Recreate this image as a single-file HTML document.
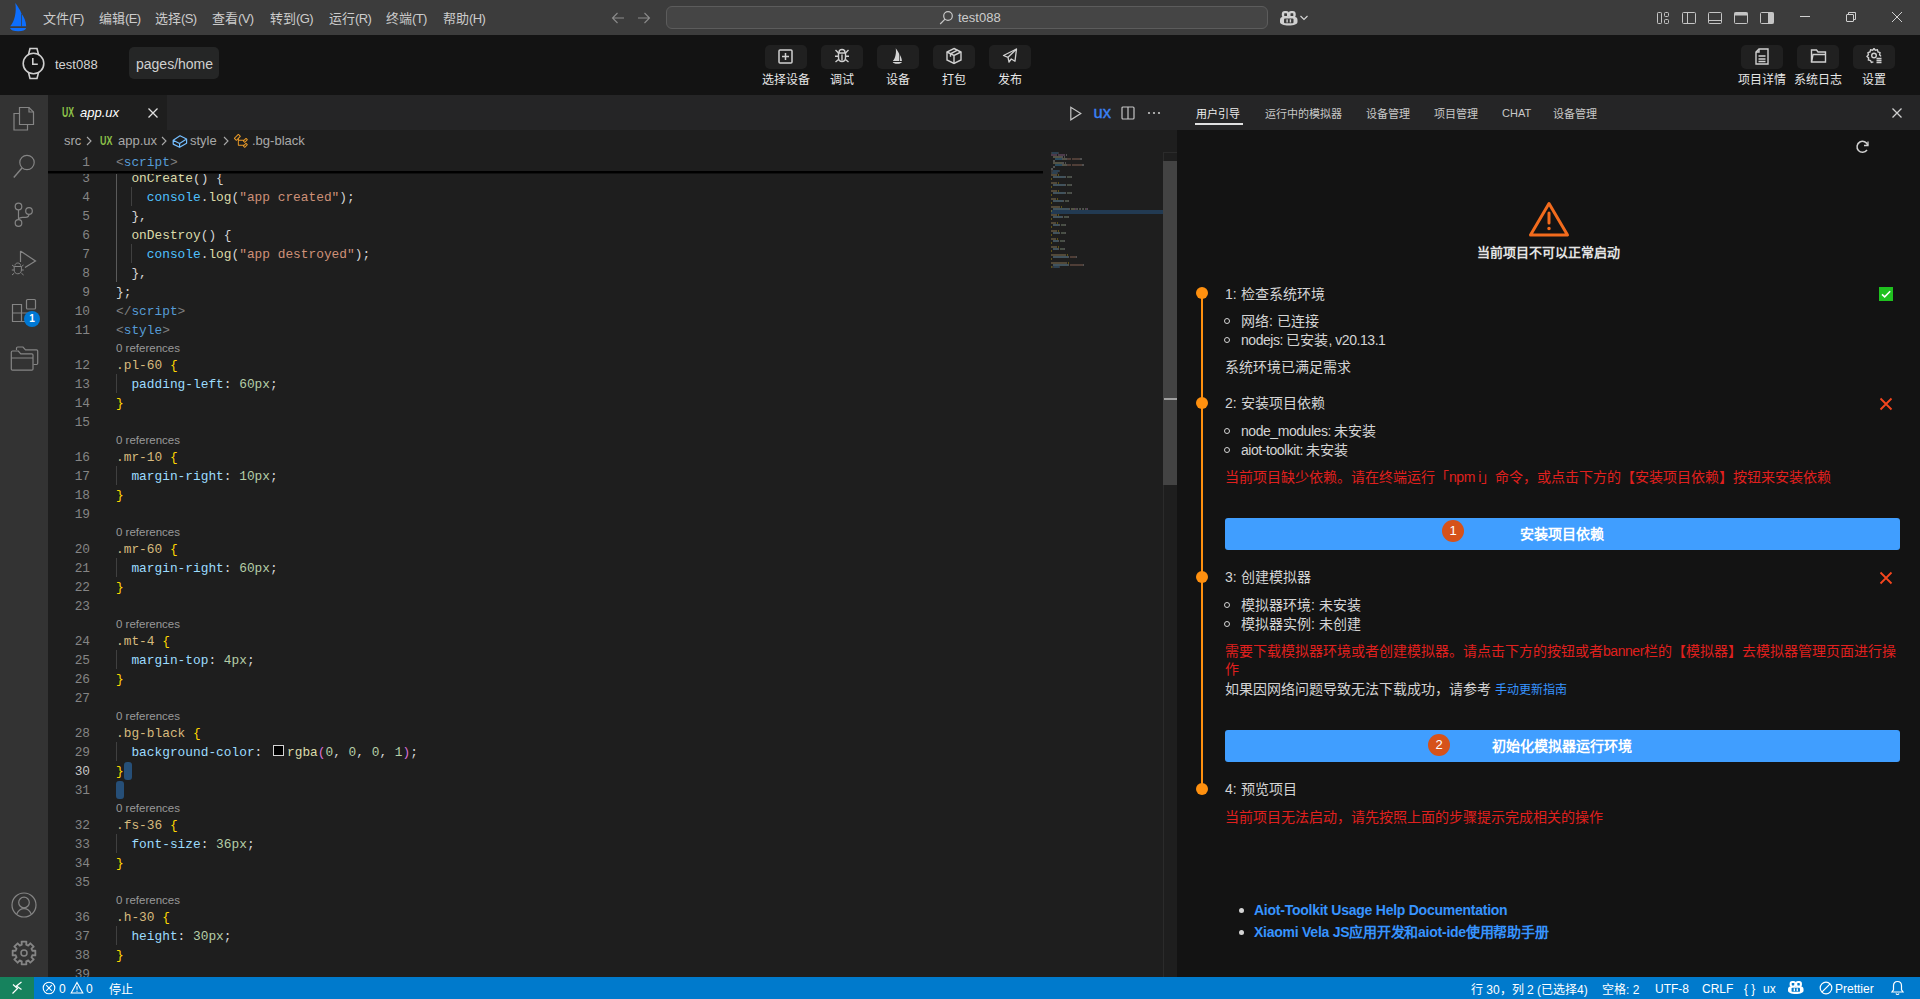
<!DOCTYPE html>
<html lang="zh-CN"><head><meta charset="utf-8">
<style>
*{box-sizing:border-box;margin:0;padding:0}
html,body{width:1920px;height:999px;overflow:hidden;background:#1e1e1e;font-family:"Liberation Sans",sans-serif;}
.a{position:absolute;white-space:pre}
#title{position:absolute;left:0;top:0;width:1920px;height:35px;background:#3c3c3c}
#tb{position:absolute;left:0;top:35px;width:1920px;height:60px;background:#131313}
#act{position:absolute;left:0;top:95px;width:48px;height:882px;background:#333333}
#ed{position:absolute;left:48px;top:95px;width:1129px;height:882px;background:#1e1e1e;overflow:hidden}
#rp{position:absolute;left:1177px;top:95px;width:743px;height:882px;background:#131313;overflow:hidden}
#sb{position:absolute;left:0;top:977px;width:1920px;height:22px;background:#007acc}
.menu{font-size:13px;color:#cccccc;top:8px}
.btn{position:absolute;width:42px;height:24px;top:10px;background:#202020;border-radius:5px}
.lbl{position:absolute;font-size:12px;color:#e6e6e6;top:35px;white-space:nowrap;text-align:center;width:80px}
.ln{position:absolute;margin-top:1px;left:48px;width:42px;text-align:right;font-family:"Liberation Mono",monospace;font-size:12.8px;line-height:19px;height:19px;color:#858585}
.ln.cur{color:#c6c6c6}
.code{position:absolute;margin-top:1px;left:116px;font-family:"Liberation Mono",monospace;font-size:12.83px;line-height:19px;height:19px;white-space:pre;color:#d4d4d4}
.cl{position:absolute;margin-top:1px;left:116px;font-size:11.5px;line-height:16px;height:16px;color:#999999;white-space:pre}
.sw{display:inline-block;width:11px;height:11px;border:1px solid #d4d4d4;background:#000;margin:0 3px 0 3px;vertical-align:0}
.g{position:absolute;width:1px;background:#404040}
.rt{position:absolute;font-size:11px;color:#c8c8c8;top:105px;white-space:nowrap}
.p14{position:absolute;font-size:14px;line-height:18px;color:#d4d4d4;white-space:nowrap}
.red{color:#e0201e}
.dot{position:absolute;left:1196px;width:12px;height:12px;border-radius:50%;background:#ff900f}
.bul{position:absolute;left:1224px;width:6px;height:6px;border-radius:50%;border:1.3px solid #d4d4d4}
.xx{position:absolute;left:1879px}
.bbtn{position:absolute;left:1225px;width:675px;height:32px;background:#409eff;border-radius:3px}
.badge{position:absolute;width:22px;height:22px;border-radius:50%;background:#d6521a;color:#fff;font-size:13px;line-height:22px;text-align:center}
.btxt{position:absolute;font-size:14px;line-height:18px;color:#fff;font-weight:bold;white-space:nowrap}
.lt{letter-spacing:-.45px}
</style></head><body>
<div id="title">
  <svg class="a" style="left:0;top:0" width="35" height="35" viewBox="0 0 35 35">
    <path d="M15.3 3C17.5 6 20 9.5 21.5 13.5C24 17 26 21 26.2 26.3H10.2C14.5 21.5 16.8 12 15.3 3z" fill="#0d6efd"/>
    <path d="M21.2 13.5v12.8h.7V14z" fill="#3c3c3c"/>
    <path d="M10 28h16.2c-.8 2.2-3.5 3.2-8 3.2S10.8 30.2 10 28z" fill="#0d6efd"/>
  </svg>
  <div class="a menu" style="left:43px">文件<span style="letter-spacing:-.6px">(F)</span></div>
  <div class="a menu" style="left:99px">编辑<span style="letter-spacing:-.6px">(E)</span></div>
  <div class="a menu" style="left:155px">选择<span style="letter-spacing:-.6px">(S)</span></div>
  <div class="a menu" style="left:212px">查看<span style="letter-spacing:-.6px">(V)</span></div>
  <div class="a menu" style="left:270px">转到<span style="letter-spacing:-.6px">(G)</span></div>
  <div class="a menu" style="left:329px">运行<span style="letter-spacing:-.6px">(R)</span></div>
  <div class="a menu" style="left:386px">终端<span style="letter-spacing:-.6px">(T)</span></div>
  <div class="a menu" style="left:443px">帮助<span style="letter-spacing:-.6px">(H)</span></div>
  <svg class="a" style="left:610px;top:10px" width="16" height="16" viewBox="0 0 16 16" fill="none" stroke="#8b8b8b" stroke-width="1.1"><path d="M14 8H2.5M7.5 3L2.5 8l5 5"/></svg>
  <svg class="a" style="left:636px;top:10px" width="16" height="16" viewBox="0 0 16 16" fill="none" stroke="#8b8b8b" stroke-width="1.1"><path d="M2 8h11.5M8.5 3l5 5-5 5"/></svg>
  <div class="a" style="left:666px;top:6px;width:602px;height:23px;background:#454545;border:1px solid #5c5c5c;border-radius:6px"></div>
  <svg class="a" style="left:938px;top:10px" width="16" height="16" viewBox="0 0 16 16" fill="none" stroke="#c8c8c8" stroke-width="1.2"><circle cx="10" cy="6" r="4.3"/><path d="M7 9.2L2.2 14"/></svg>
  <div class="a" style="left:958px;top:10px;font-size:13px;color:#cccccc">test088</div>
  <svg class="a" style="left:1280px;top:11px" width="18" height="15" viewBox="0 0 18 15"><rect x="1.8" y="0" width="7.4" height="7" rx="3" fill="#d0d0d0"/><rect x="8.3" y="0" width="7.4" height="7" rx="3" fill="#d0d0d0"/><path d="M0 9C0 7 1.5 5.8 3.5 5.8H14C16 5.8 17.5 7 17.5 9v2c0 2-3.5 3.6-8.75 3.6S0 13 0 11z" fill="#d0d0d0"/><rect x="4.2" y="2.2" width="2.8" height="2.8" rx=".5" fill="#3c3c3c"/><rect x="10.5" y="2.2" width="2.8" height="2.8" rx=".5" fill="#3c3c3c"/><rect x="4" y="7.6" width="9.5" height="4.6" rx="1" fill="#3c3c3c"/><rect x="6.4" y="8.3" width="1.4" height="3.2" fill="#d0d0d0"/><rect x="9.7" y="8.3" width="1.4" height="3.2" fill="#d0d0d0"/></svg>
  <svg class="a" style="left:1299px;top:13px" width="10" height="10" viewBox="0 0 10 10" fill="none" stroke="#d8d8d8" stroke-width="1.1"><path d="M1.5 3L5 6.5 8.5 3"/></svg>
  <svg class="a" style="left:1655px;top:10px" width="16" height="16" viewBox="0 0 16 16" fill="none" stroke="#c5c5c5" stroke-width="1"><rect x="2.5" y="2.5" width="4" height="11" rx=".8"/><rect x="9.5" y="2.5" width="4" height="4" rx="1"/><rect x="9.5" y="9.5" width="4" height="4" rx="1"/></svg>
  <svg class="a" style="left:1681px;top:10px" width="16" height="16" viewBox="0 0 16 16" fill="none" stroke="#c5c5c5" stroke-width="1"><rect x="1.5" y="2.5" width="13" height="11" rx="1"/><path d="M6.5 2.5v11"/></svg>
  <svg class="a" style="left:1707px;top:10px" width="16" height="16" viewBox="0 0 16 16" fill="none" stroke="#c5c5c5" stroke-width="1"><rect x="1.5" y="2.5" width="13" height="11" rx="1"/><path d="M1.5 10.5h13"/></svg>
  <svg class="a" style="left:1733px;top:10px" width="16" height="16" viewBox="0 0 16 16"><rect x="1.5" y="2.5" width="13" height="11" rx="1" fill="none" stroke="#c5c5c5"/><rect x="1.5" y="2.5" width="13" height="3" fill="#c5c5c5"/></svg>
  <svg class="a" style="left:1759px;top:10px" width="16" height="16" viewBox="0 0 16 16"><rect x="1.5" y="2.5" width="13" height="11" rx="1" fill="none" stroke="#c5c5c5"/><rect x="9" y="2.5" width="5.5" height="11" fill="#c5c5c5"/></svg>
  <div class="a" style="left:1800px;top:16px;width:10px;height:1px;background:#d0d0d0"></div>
  <svg class="a" style="left:1845px;top:11px" width="12" height="12" viewBox="0 0 12 12" fill="none" stroke="#d0d0d0" stroke-width="1"><rect x="1.5" y="3.5" width="7" height="7" rx=".5"/><path d="M3.5 3.5V1.5h7v7h-2"/></svg>
  <svg class="a" style="left:1891px;top:11px" width="12" height="12" viewBox="0 0 12 12" fill="none" stroke="#d0d0d0" stroke-width="1"><path d="M1 1l10 10M11 1L1 11"/></svg>
</div>
<div id="tb">
  <svg class="a" style="left:21px;top:12px" width="25" height="33" viewBox="0 0 25 33" fill="none" stroke="#cfcfcf" stroke-width="1.6"><circle cx="12.5" cy="16.5" r="10.3"/><path d="M7.5 7.5L9 1.5h7l1.5 6M7.5 25.5L9 31.5h7l1.5-6"/><path d="M11.8 11v6.3h5"/></svg>
  <div class="a" style="left:55px;top:22px;font-size:13px;color:#d4d4d4">test088</div>
  <div class="a" style="left:129px;top:12px;width:90px;height:32px;background:#252626;border-radius:5px"></div>
  <div class="a" style="left:136px;top:20.5px;font-size:14px;color:#d0d0d0">pages/home</div>
  <div class="btn" style="left:765px"></div><div class="btn" style="left:821px"></div><div class="btn" style="left:877px"></div><div class="btn" style="left:933px"></div><div class="btn" style="left:989px"></div>
  <div class="btn" style="left:1741px"></div><div class="btn" style="left:1797px"></div><div class="btn" style="left:1853px"></div>
  <svg class="a" style="left:778px;top:14px" width="15" height="15" viewBox="0 0 15 15" fill="none" stroke="#cfcfcf" stroke-width="1.5"><rect x="1" y="1" width="13" height="13" rx="1"/><path d="M7.5 4v7M4 7.5h7"/></svg>
  <svg class="a" style="left:834px;top:13px" width="16" height="15" viewBox="0 0 16 15" fill="none" stroke="#cfcfcf" stroke-width="1.4"><path d="M5 4.5C5 2.5 6.3 1.5 8 1.5S11 2.5 11 4.5M4.5 5h7v4.5C11.5 12 10 13.5 8 13.5S4.5 12 4.5 9.5z"/><path d="M8 6.5v6M1.5 2l3 3M14.5 2l-3 3M1 8.2h3.5M15 8.2h-3.5M1.5 14l3-2.5M14.5 14l-3-2.5"/></svg>
  <svg class="a" style="left:880px;top:9px" width="40" height="26" viewBox="880 44 40 26"><g transform="translate(892.8,48.2) scale(0.57,0.55) translate(-10.2,-3)"><path d="M15.3 3C17.5 6 20 9.5 21.5 13.5C24 17 26 21 26.2 26.3H10.2C14.5 21.5 16.8 12 15.3 3z" fill="#d4d4d4"/><path d="M21.2 13.5v12.8h1.2V14z" fill="#202020"/><path d="M10 28h16.2c-.8 2.2-3.5 3.2-8 3.2S10.8 30.2 10 28z" fill="#d4d4d4"/></g></svg>
  <svg class="a" style="left:945px;top:12px" width="18" height="18" viewBox="0 0 18 18" fill="none" stroke="#cfcfcf" stroke-width="1.4"><path d="M9 1.5l7 3.5v8L9 16.5 2 13V5z"/><path d="M2 5l7 3.5L16 5M9 8.5v8M12.5 3.2L5.5 6.8v3"/></svg>
  <svg class="a" style="left:1002px;top:13px" width="17" height="17" viewBox="0 0 17 17" fill="none" stroke="#cfcfcf" stroke-width="1.3" stroke-linejoin="round"><path d="M14.5 1L1.5 7.5l4.5 1.8 1 4.7 2.3-3 3.7 2.2z"/><path d="M14.5 1L6 9.3"/></svg>
  <svg class="a" style="left:1755px;top:13px" width="14" height="17" viewBox="0 0 14 17" fill="none" stroke="#cfcfcf" stroke-width="1.4"><path d="M4 1h9v15H1V4z"/><path d="M1 4h3V1" /><path d="M3.5 8h7M3.5 11h7M3.5 13.5h7" stroke-width="1.6"/></svg>
  <svg class="a" style="left:1810px;top:13px" width="17" height="16" viewBox="0 0 17 16" fill="none" stroke="#cfcfcf" stroke-width="1.4"><path d="M1.5 2h5l1.5 2h7.5v10H1.5z"/><path d="M1.5 14L3 6.5h13"/></svg>
  <svg class="a" style="left:1866px;top:12px" width="17" height="17" viewBox="0 0 17 17" fill="none" stroke="#cfcfcf" stroke-width="1.4"><path d="M8 1.5l1.3 1.7 2.1-.3.6 2 2 .8-.4 2.1 1.4 1.6M8 1.5L6.7 3.2 4.6 2.9 4 4.9l-2 .8.4 2.1L1 9.4l1.6 1.5-.2 2.1 2.1.5.9 2 2-.6"/><circle cx="8" cy="8.5" r="2.3"/><path d="M10.5 11.5h5M10.5 13.5h5M10.5 15.5h5"/></svg>
  <div class="lbl" style="left:746px">选择设备</div>
  <div class="lbl" style="left:802px">调试</div>
  <div class="lbl" style="left:858px">设备</div>
  <div class="lbl" style="left:914px">打包</div>
  <div class="lbl" style="left:970px">发布</div>
  <div class="lbl" style="left:1722px">项目详情</div>
  <div class="lbl" style="left:1778px">系统日志</div>
  <div class="lbl" style="left:1834px">设置</div>
</div>
<div id="act"></div>
<svg class="a" style="left:0;top:95px" width="48" height="882" viewBox="0 95 48 882" fill="none" stroke="#858585" stroke-width="1.2">
  <path d="M19.5 113.5h-5.5v16.5h13.5v-5.5"/>
  <path d="M19.5 107.5h9.5l4.5 4.5v12.5h-14z"/><path d="M29 107.5v4.5h4.5"/>
  <circle cx="27" cy="162.5" r="7.2"/><path d="M22 168L13.8 177.5" stroke-width="1.4"/>
  <circle cx="18.5" cy="206.5" r="3.3"/><circle cx="29" cy="211" r="3.3"/><circle cx="18.5" cy="223" r="3.3"/>
  <path d="M18.5 210v9.5M29 214.3c0 2-1.5 3-3.5 3h-3c-2 0-4 1.2-4 2.5"/>
  <path d="M20.5 251v11M20.5 251l15 10-10.5 6.5"/>
  <path d="M15 265.5c0-1.5 1.2-2.5 2.8-2.5s2.7 1 2.7 2.5M14.2 266.5h7.2v3.5c0 2.3-1.5 3.8-3.6 3.8s-3.6-1.5-3.6-3.8z M12 265l2 1.5M23.5 265l-2 1.5M11.8 270h2.4M21.4 270h2.4M12 275l2.2-1.8M23.6 275l-2.2-1.8" stroke-width="1"/>
  <path d="M12.5 304.5h9v17h-9zM12.5 313h17v8.5h-8" /><rect x="26.5" y="299.5" width="9" height="9.5" rx="1"/>
  <path d="M16.5 350v-1.8c0-.8.5-1.2 1.2-1.2h5.3l2.5 2.8h11c.8 0 1.2.5 1.2 1.2v12.3c0 .8-.5 1.2-1.2 1.2H33.5"/>
  <path d="M11.3 353v-.8c0-.8.5-1.2 1.2-1.2h5.8l2.5 2.8h11c.8 0 1.2.5 1.2 1.2v14c0 .8-.5 1.2-1.2 1.2h-19.3c-.8 0-1.2-.5-1.2-1.2z M11.3 358h21.7"/>
  <circle cx="24" cy="905" r="12"/><circle cx="24" cy="902.5" r="5.3"/><path d="M16.8 914c1.5-3.6 4.2-5.4 7.2-5.4s5.7 1.8 7.2 5.4"/>
  <circle cx="24" cy="953" r="3" stroke-width="1.5"/>
  <path d="M21.77 944.69 L21.59 941.65 L26.41 941.65 L26.23 944.69 L28.30 945.55 L30.32 943.27 L33.73 946.68 L31.45 948.70 L32.31 950.77 L35.35 950.59 L35.35 955.41 L32.31 955.23 L31.45 957.30 L33.73 959.32 L30.32 962.73 L28.30 960.45 L26.23 961.31 L26.41 964.35 L21.59 964.35 L21.77 961.31 L19.70 960.45 L17.68 962.73 L14.27 959.32 L16.55 957.30 L15.69 955.23 L12.65 955.41 L12.65 950.59 L15.69 950.77 L16.55 948.70 L14.27 946.68 L17.68 943.27 L19.70 945.55z" stroke-width="1.8" stroke-linejoin="round"/>
</svg>
<div class="a" style="left:24px;top:311px;width:16px;height:16px;border-radius:50%;background:#0078d4;color:#fff;font-size:10px;font-weight:bold;text-align:center;line-height:16px">1</div>
<div id="ed"></div>
<div class="a" style="left:167px;top:95px;width:1010px;height:35px;background:#252526"></div>
<div class="a" style="left:48px;top:95px;width:119px;height:35px;background:#1e1e1e"></div>
<div class="a" style="left:61.5px;top:104px;font-size:14px;font-weight:bold;color:#8dc149;transform:scaleX(.62);transform-origin:left">UX</div>
<div class="a" style="left:80px;top:105px;font-size:13px;font-style:italic;color:#ffffff">app.ux</div>
<svg class="a" style="left:146px;top:106px" width="14" height="14" viewBox="0 0 14 14" fill="none" stroke="#e0e0e0" stroke-width="1.3"><path d="M2.5 2.5l9 9M11.5 2.5l-9 9"/></svg>
<div class="a" style="left:64px;top:133px;font-size:13px;color:#a9a9a9">src</div>
<svg class="a" style="left:84px;top:135px" width="10" height="12" viewBox="0 0 10 12" fill="none" stroke="#a9a9a9" stroke-width="1.1"><path d="M3 2l4 4-4 4"/></svg>
<div class="a" style="left:100px;top:133px;font-size:13.5px;font-weight:bold;color:#8dc149;transform:scaleX(.66);transform-origin:left">UX</div>
<div class="a" style="left:118px;top:133px;font-size:13px;color:#a9a9a9">app.ux</div>
<svg class="a" style="left:159px;top:135px" width="10" height="12" viewBox="0 0 10 12" fill="none" stroke="#a9a9a9" stroke-width="1.1"><path d="M3 2l4 4-4 4"/></svg>
<svg class="a" style="left:172px;top:134px" width="16" height="15" viewBox="0 0 16 15" fill="none" stroke="#75beff" stroke-width="1.2" stroke-linejoin="round"><path d="M1.2 6.3L8 1.8l6.6 3.2v4.2L7.6 13.3 1.2 10.1z M1.2 6.3l6.4 3.2 7-4.5 M7.6 9.5v3.8"/></svg>
<div class="a" style="left:190px;top:133px;font-size:13px;color:#a9a9a9">style</div>
<svg class="a" style="left:221px;top:135px" width="10" height="12" viewBox="0 0 10 12" fill="none" stroke="#a9a9a9" stroke-width="1.1"><path d="M3 2l4 4-4 4"/></svg>
<svg class="a" style="left:233px;top:133px" width="16" height="16" viewBox="0 0 16 16"><path fill="#ee9d28" d="M11.34 9.71h.71l2.67-2.67v-.71L13.38 5h-.7l-1.82 1.81h-5V5.560l1.86-1.85V3l-2-2H5L1 5v.71l2 2h.71l1.14-1.15v5.790l.5.5H10v.52l1.33 1.34h.71l2.67-2.67v-.71L13.37 10h-.7l-1.860 1.85h-5v-4H10v.48l1.34 1.38zm1.69-3.65l.63.63-2 2-.63-.63 2-2zm0 5l.63.63-2 2-.63-.63 2-2zM3.35 6.65l-1.29-1.3 3.29-3.29 1.3 1.29-3.3 3.3z"/></svg>
<div class="a" style="left:252px;top:133px;font-size:13px;color:#a9a9a9">.bg-black</div>
<div class="g" style="left:116px;top:171px;height:111px;background:#5a5a5a"></div>
<div class="g" style="left:131px;top:187px;height:19px"></div>
<div class="g" style="left:131px;top:244px;height:19px"></div>
<div class="g" style="left:116px;top:374px;height:19px"></div>
<div class="g" style="left:116px;top:466px;height:19px"></div>
<div class="g" style="left:116px;top:558px;height:19px"></div>
<div class="g" style="left:116px;top:650px;height:19px"></div>
<div class="g" style="left:116px;top:742px;height:19px"></div>
<div class="g" style="left:116px;top:834px;height:19px"></div>
<div class="g" style="left:116px;top:926px;height:19px"></div>
<div class="a" style="left:124px;top:762px;width:8px;height:18px;background:#264f78;border-radius:3px"></div>
<div class="a" style="left:116px;top:781px;width:8px;height:18px;background:#264f78;border-radius:3px"></div>
<div class="ln" style="top:168px">3</div>
<div class="code" style="top:168px"><span style="color:#d4d4d4">  </span><span style="color:#dcdcaa">onCreate</span><span style="color:#d4d4d4">() {</span></div>
<div class="ln" style="top:187px">4</div>
<div class="code" style="top:187px"><span style="color:#d4d4d4">    </span><span style="color:#4fc1ff">console</span><span style="color:#d4d4d4">.</span><span style="color:#dcdcaa">log</span><span style="color:#d4d4d4">(</span><span style="color:#ce9178">&quot;app created&quot;</span><span style="color:#d4d4d4">);</span></div>
<div class="ln" style="top:206px">5</div>
<div class="code" style="top:206px"><span style="color:#d4d4d4">  },</span></div>
<div class="ln" style="top:225px">6</div>
<div class="code" style="top:225px"><span style="color:#d4d4d4">  </span><span style="color:#dcdcaa">onDestroy</span><span style="color:#d4d4d4">() {</span></div>
<div class="ln" style="top:244px">7</div>
<div class="code" style="top:244px"><span style="color:#d4d4d4">    </span><span style="color:#4fc1ff">console</span><span style="color:#d4d4d4">.</span><span style="color:#dcdcaa">log</span><span style="color:#d4d4d4">(</span><span style="color:#ce9178">&quot;app destroyed&quot;</span><span style="color:#d4d4d4">);</span></div>
<div class="ln" style="top:263px">8</div>
<div class="code" style="top:263px"><span style="color:#d4d4d4">  },</span></div>
<div class="ln" style="top:282px">9</div>
<div class="code" style="top:282px"><span style="color:#d4d4d4">};</span></div>
<div class="ln" style="top:301px">10</div>
<div class="code" style="top:301px"><span style="color:#808080">&lt;/</span><span style="color:#569cd6">script</span><span style="color:#808080">&gt;</span></div>
<div class="ln" style="top:320px">11</div>
<div class="code" style="top:320px"><span style="color:#808080">&lt;</span><span style="color:#569cd6">style</span><span style="color:#808080">&gt;</span></div>
<div class="cl" style="top:339px">0 references</div>
<div class="ln" style="top:355px">12</div>
<div class="code" style="top:355px"><span style="color:#d7ba7d">.pl-60</span><span style="color:#d4d4d4"> </span><span style="color:#ffd700">{</span></div>
<div class="ln" style="top:374px">13</div>
<div class="code" style="top:374px"><span style="color:#d4d4d4">  </span><span style="color:#9cdcfe">padding-left</span><span style="color:#d4d4d4">: </span><span style="color:#b5cea8">60px</span><span style="color:#d4d4d4">;</span></div>
<div class="ln" style="top:393px">14</div>
<div class="code" style="top:393px"><span style="color:#ffd700">}</span></div>
<div class="ln" style="top:412px">15</div>
<div class="code" style="top:412px"></div>
<div class="cl" style="top:431px">0 references</div>
<div class="ln" style="top:447px">16</div>
<div class="code" style="top:447px"><span style="color:#d7ba7d">.mr-10</span><span style="color:#d4d4d4"> </span><span style="color:#ffd700">{</span></div>
<div class="ln" style="top:466px">17</div>
<div class="code" style="top:466px"><span style="color:#d4d4d4">  </span><span style="color:#9cdcfe">margin-right</span><span style="color:#d4d4d4">: </span><span style="color:#b5cea8">10px</span><span style="color:#d4d4d4">;</span></div>
<div class="ln" style="top:485px">18</div>
<div class="code" style="top:485px"><span style="color:#ffd700">}</span></div>
<div class="ln" style="top:504px">19</div>
<div class="code" style="top:504px"></div>
<div class="cl" style="top:523px">0 references</div>
<div class="ln" style="top:539px">20</div>
<div class="code" style="top:539px"><span style="color:#d7ba7d">.mr-60</span><span style="color:#d4d4d4"> </span><span style="color:#ffd700">{</span></div>
<div class="ln" style="top:558px">21</div>
<div class="code" style="top:558px"><span style="color:#d4d4d4">  </span><span style="color:#9cdcfe">margin-right</span><span style="color:#d4d4d4">: </span><span style="color:#b5cea8">60px</span><span style="color:#d4d4d4">;</span></div>
<div class="ln" style="top:577px">22</div>
<div class="code" style="top:577px"><span style="color:#ffd700">}</span></div>
<div class="ln" style="top:596px">23</div>
<div class="code" style="top:596px"></div>
<div class="cl" style="top:615px">0 references</div>
<div class="ln" style="top:631px">24</div>
<div class="code" style="top:631px"><span style="color:#d7ba7d">.mt-4</span><span style="color:#d4d4d4"> </span><span style="color:#ffd700">{</span></div>
<div class="ln" style="top:650px">25</div>
<div class="code" style="top:650px"><span style="color:#d4d4d4">  </span><span style="color:#9cdcfe">margin-top</span><span style="color:#d4d4d4">: </span><span style="color:#b5cea8">4px</span><span style="color:#d4d4d4">;</span></div>
<div class="ln" style="top:669px">26</div>
<div class="code" style="top:669px"><span style="color:#ffd700">}</span></div>
<div class="ln" style="top:688px">27</div>
<div class="code" style="top:688px"></div>
<div class="cl" style="top:707px">0 references</div>
<div class="ln" style="top:723px">28</div>
<div class="code" style="top:723px"><span style="color:#d7ba7d">.bg-black</span><span style="color:#d4d4d4"> </span><span style="color:#ffd700">{</span></div>
<div class="ln" style="top:742px">29</div>
<div class="code" style="top:742px"><span style="color:#d4d4d4">  </span><span style="color:#9cdcfe">background-color</span><span style="color:#d4d4d4">: </span><span class="sw"></span><span style="color:#dcdcaa">rgba</span><span style="color:#da70d6">(</span><span style="color:#b5cea8">0</span><span style="color:#d4d4d4">, </span><span style="color:#b5cea8">0</span><span style="color:#d4d4d4">, </span><span style="color:#b5cea8">0</span><span style="color:#d4d4d4">, </span><span style="color:#b5cea8">1</span><span style="color:#da70d6">)</span><span style="color:#d4d4d4">;</span></div>
<div class="ln cur" style="top:761px">30</div>
<div class="code" style="top:761px"><span style="color:#ffd700">}</span></div>
<div class="ln" style="top:780px">31</div>
<div class="code" style="top:780px"></div>
<div class="cl" style="top:799px">0 references</div>
<div class="ln" style="top:815px">32</div>
<div class="code" style="top:815px"><span style="color:#d7ba7d">.fs-36</span><span style="color:#d4d4d4"> </span><span style="color:#ffd700">{</span></div>
<div class="ln" style="top:834px">33</div>
<div class="code" style="top:834px"><span style="color:#d4d4d4">  </span><span style="color:#9cdcfe">font-size</span><span style="color:#d4d4d4">: </span><span style="color:#b5cea8">36px</span><span style="color:#d4d4d4">;</span></div>
<div class="ln" style="top:853px">34</div>
<div class="code" style="top:853px"><span style="color:#ffd700">}</span></div>
<div class="ln" style="top:872px">35</div>
<div class="code" style="top:872px"></div>
<div class="cl" style="top:891px">0 references</div>
<div class="ln" style="top:907px">36</div>
<div class="code" style="top:907px"><span style="color:#d7ba7d">.h-30</span><span style="color:#d4d4d4"> </span><span style="color:#ffd700">{</span></div>
<div class="ln" style="top:926px">37</div>
<div class="code" style="top:926px"><span style="color:#d4d4d4">  </span><span style="color:#9cdcfe">height</span><span style="color:#d4d4d4">: </span><span style="color:#b5cea8">30px</span><span style="color:#d4d4d4">;</span></div>
<div class="ln" style="top:945px">38</div>
<div class="code" style="top:945px"><span style="color:#ffd700">}</span></div>
<div class="ln" style="top:964px">39</div>
<div class="code" style="top:964px"></div>
<div class="a" style="left:48px;top:152px;width:995px;height:19px;background:#1e1e1e"></div><div class="a" style="left:48px;top:171px;width:995px;height:2px;background:#000"></div><div class="a" style="left:48px;top:173px;width:995px;height:1px;background:#101010"></div>
<div class="ln" style="top:152px">1</div>
<div class="code" style="top:152px"><span style="color:#808080">&lt;</span><span style="color:#569cd6">script</span><span style="color:#808080">&gt;</span></div>
<div class="a" style="left:1043px;top:152px;width:120px;height:19px;background:#1e1e1e"></div>
<div class="a" style="left:1051px;top:210px;width:112px;height:4px;background:#223a52"></div>
<svg class="a" style="left:1051px;top:152px;opacity:.4" width="112" height="120"><rect x="0" y="0.3" width="1" height="1.4" fill="#808080"/><rect x="1" y="0.3" width="6" height="1.4" fill="#569cd6"/><rect x="7" y="0.3" width="1" height="1.4" fill="#808080"/><rect x="0" y="2.3" width="6" height="1.4" fill="#c586c0"/><rect x="7" y="2.3" width="7" height="1.4" fill="#c586c0"/><rect x="15" y="2.3" width="1" height="1.4" fill="#d4d4d4"/><rect x="2" y="4.3" width="8" height="1.4" fill="#dcdcaa"/><rect x="10" y="4.3" width="2" height="1.4" fill="#d4d4d4"/><rect x="13" y="4.3" width="1" height="1.4" fill="#d4d4d4"/><rect x="4" y="6.3" width="7" height="1.4" fill="#4fc1ff"/><rect x="11" y="6.3" width="1" height="1.4" fill="#d4d4d4"/><rect x="12" y="6.3" width="3" height="1.4" fill="#dcdcaa"/><rect x="15" y="6.3" width="1" height="1.4" fill="#d4d4d4"/><rect x="16" y="6.3" width="4" height="1.4" fill="#ce9178"/><rect x="21" y="6.3" width="8" height="1.4" fill="#ce9178"/><rect x="29" y="6.3" width="2" height="1.4" fill="#d4d4d4"/><rect x="2" y="8.3" width="2" height="1.4" fill="#d4d4d4"/><rect x="2" y="10.3" width="9" height="1.4" fill="#dcdcaa"/><rect x="11" y="10.3" width="2" height="1.4" fill="#d4d4d4"/><rect x="14" y="10.3" width="1" height="1.4" fill="#d4d4d4"/><rect x="4" y="12.3" width="7" height="1.4" fill="#4fc1ff"/><rect x="11" y="12.3" width="1" height="1.4" fill="#d4d4d4"/><rect x="12" y="12.3" width="3" height="1.4" fill="#dcdcaa"/><rect x="15" y="12.3" width="1" height="1.4" fill="#d4d4d4"/><rect x="16" y="12.3" width="4" height="1.4" fill="#ce9178"/><rect x="21" y="12.3" width="10" height="1.4" fill="#ce9178"/><rect x="31" y="12.3" width="2" height="1.4" fill="#d4d4d4"/><rect x="2" y="14.3" width="2" height="1.4" fill="#d4d4d4"/><rect x="0" y="16.3" width="2" height="1.4" fill="#d4d4d4"/><rect x="0" y="18.3" width="2" height="1.4" fill="#808080"/><rect x="2" y="18.3" width="6" height="1.4" fill="#569cd6"/><rect x="8" y="18.3" width="1" height="1.4" fill="#808080"/><rect x="0" y="20.3" width="1" height="1.4" fill="#808080"/><rect x="1" y="20.3" width="5" height="1.4" fill="#569cd6"/><rect x="6" y="20.3" width="1" height="1.4" fill="#808080"/><rect x="0" y="22.3" width="6" height="1.4" fill="#d7ba7d"/><rect x="7" y="22.3" width="1" height="1.4" fill="#ffd700"/><rect x="2" y="24.3" width="12" height="1.4" fill="#9cdcfe"/><rect x="14" y="24.3" width="1" height="1.4" fill="#d4d4d4"/><rect x="16" y="24.3" width="4" height="1.4" fill="#b5cea8"/><rect x="20" y="24.3" width="1" height="1.4" fill="#d4d4d4"/><rect x="0" y="26.3" width="1" height="1.4" fill="#ffd700"/><rect x="0" y="30.3" width="6" height="1.4" fill="#d7ba7d"/><rect x="7" y="30.3" width="1" height="1.4" fill="#ffd700"/><rect x="2" y="32.3" width="12" height="1.4" fill="#9cdcfe"/><rect x="14" y="32.3" width="1" height="1.4" fill="#d4d4d4"/><rect x="16" y="32.3" width="4" height="1.4" fill="#b5cea8"/><rect x="20" y="32.3" width="1" height="1.4" fill="#d4d4d4"/><rect x="0" y="34.3" width="1" height="1.4" fill="#ffd700"/><rect x="0" y="38.3" width="6" height="1.4" fill="#d7ba7d"/><rect x="7" y="38.3" width="1" height="1.4" fill="#ffd700"/><rect x="2" y="40.3" width="12" height="1.4" fill="#9cdcfe"/><rect x="14" y="40.3" width="1" height="1.4" fill="#d4d4d4"/><rect x="16" y="40.3" width="4" height="1.4" fill="#b5cea8"/><rect x="20" y="40.3" width="1" height="1.4" fill="#d4d4d4"/><rect x="0" y="42.3" width="1" height="1.4" fill="#ffd700"/><rect x="0" y="46.3" width="5" height="1.4" fill="#d7ba7d"/><rect x="6" y="46.3" width="1" height="1.4" fill="#ffd700"/><rect x="2" y="48.3" width="10" height="1.4" fill="#9cdcfe"/><rect x="12" y="48.3" width="1" height="1.4" fill="#d4d4d4"/><rect x="14" y="48.3" width="3" height="1.4" fill="#b5cea8"/><rect x="17" y="48.3" width="1" height="1.4" fill="#d4d4d4"/><rect x="0" y="50.3" width="1" height="1.4" fill="#ffd700"/><rect x="0" y="54.3" width="9" height="1.4" fill="#d7ba7d"/><rect x="10" y="54.3" width="1" height="1.4" fill="#ffd700"/><rect x="2" y="56.3" width="16" height="1.4" fill="#9cdcfe"/><rect x="18" y="56.3" width="1" height="1.4" fill="#d4d4d4"/><rect x="20" y="56.3" width="4" height="1.4" fill="#dcdcaa"/><rect x="24" y="56.3" width="1" height="1.4" fill="#da70d6"/><rect x="25" y="56.3" width="1" height="1.4" fill="#b5cea8"/><rect x="26" y="56.3" width="1" height="1.4" fill="#d4d4d4"/><rect x="28" y="56.3" width="1" height="1.4" fill="#b5cea8"/><rect x="29" y="56.3" width="1" height="1.4" fill="#d4d4d4"/><rect x="31" y="56.3" width="1" height="1.4" fill="#b5cea8"/><rect x="32" y="56.3" width="1" height="1.4" fill="#d4d4d4"/><rect x="34" y="56.3" width="1" height="1.4" fill="#b5cea8"/><rect x="35" y="56.3" width="1" height="1.4" fill="#da70d6"/><rect x="36" y="56.3" width="1" height="1.4" fill="#d4d4d4"/><rect x="0" y="58.3" width="1" height="1.4" fill="#ffd700"/><rect x="0" y="62.3" width="6" height="1.4" fill="#d7ba7d"/><rect x="7" y="62.3" width="1" height="1.4" fill="#ffd700"/><rect x="2" y="64.3" width="9" height="1.4" fill="#9cdcfe"/><rect x="11" y="64.3" width="1" height="1.4" fill="#d4d4d4"/><rect x="13" y="64.3" width="4" height="1.4" fill="#b5cea8"/><rect x="17" y="64.3" width="1" height="1.4" fill="#d4d4d4"/><rect x="0" y="66.3" width="1" height="1.4" fill="#ffd700"/><rect x="0" y="70.3" width="5" height="1.4" fill="#d7ba7d"/><rect x="6" y="70.3" width="1" height="1.4" fill="#ffd700"/><rect x="2" y="72.3" width="6" height="1.4" fill="#9cdcfe"/><rect x="8" y="72.3" width="1" height="1.4" fill="#d4d4d4"/><rect x="10" y="72.3" width="4" height="1.4" fill="#b5cea8"/><rect x="14" y="72.3" width="1" height="1.4" fill="#d4d4d4"/><rect x="0" y="74.3" width="1" height="1.4" fill="#ffd700"/><rect x="0" y="78.3" width="6" height="1.4" fill="#d7ba7d"/><rect x="7" y="78.3" width="1" height="1.4" fill="#ffd700"/><rect x="2" y="80.3" width="6" height="1.4" fill="#9cdcfe"/><rect x="8" y="80.3" width="1" height="1.4" fill="#d4d4d4"/><rect x="10" y="80.3" width="4" height="1.4" fill="#b5cea8"/><rect x="14" y="80.3" width="1" height="1.4" fill="#d4d4d4"/><rect x="0" y="82.3" width="1" height="1.4" fill="#ffd700"/><rect x="0" y="86.3" width="5" height="1.4" fill="#d7ba7d"/><rect x="6" y="86.3" width="1" height="1.4" fill="#ffd700"/><rect x="2" y="88.3" width="5" height="1.4" fill="#9cdcfe"/><rect x="7" y="88.3" width="1" height="1.4" fill="#d4d4d4"/><rect x="9" y="88.3" width="4" height="1.4" fill="#b5cea8"/><rect x="13" y="88.3" width="1" height="1.4" fill="#d4d4d4"/><rect x="0" y="90.3" width="1" height="1.4" fill="#ffd700"/><rect x="0" y="94.3" width="6" height="1.4" fill="#d7ba7d"/><rect x="7" y="94.3" width="1" height="1.4" fill="#ffd700"/><rect x="2" y="96.3" width="5" height="1.4" fill="#9cdcfe"/><rect x="7" y="96.3" width="1" height="1.4" fill="#d4d4d4"/><rect x="9" y="96.3" width="4" height="1.4" fill="#b5cea8"/><rect x="13" y="96.3" width="1" height="1.4" fill="#d4d4d4"/><rect x="0" y="98.3" width="1" height="1.4" fill="#ffd700"/><rect x="0" y="102.3" width="15" height="1.4" fill="#d7ba7d"/><rect x="16" y="102.3" width="1" height="1.4" fill="#ffd700"/><rect x="2" y="104.3" width="15" height="1.4" fill="#9cdcfe"/><rect x="17" y="104.3" width="1" height="1.4" fill="#d4d4d4"/><rect x="19" y="104.3" width="6" height="1.4" fill="#ce9178"/><rect x="25" y="104.3" width="1" height="1.4" fill="#d4d4d4"/><rect x="0" y="106.3" width="1" height="1.4" fill="#ffd700"/><rect x="0" y="110.3" width="16" height="1.4" fill="#d7ba7d"/><rect x="17" y="110.3" width="1" height="1.4" fill="#ffd700"/><rect x="2" y="112.3" width="15" height="1.4" fill="#9cdcfe"/><rect x="17" y="112.3" width="1" height="1.4" fill="#d4d4d4"/><rect x="19" y="112.3" width="13" height="1.4" fill="#ce9178"/><rect x="32" y="112.3" width="1" height="1.4" fill="#d4d4d4"/><rect x="0" y="114.3" width="1" height="1.4" fill="#ffd700"/><rect x="1" y="114.3" width="2" height="1.4" fill="#808080"/><rect x="3" y="114.3" width="5" height="1.4" fill="#569cd6"/><rect x="8" y="114.3" width="1" height="1.4" fill="#808080"/></svg>
<div class="a" style="left:1163px;top:152px;width:14px;height:825px;background:#1e1e1e;border-left:1px solid #2b2b2b;border-top:1px solid #2b2b2b"></div>
<div class="a" style="left:1163px;top:161px;width:14px;height:324px;background:#434343"></div>
<div class="a" style="left:1164px;top:398px;width:13px;height:2px;background:#a0a0a0"></div>
<svg class="a" style="left:1066px;top:105px" width="18" height="18" viewBox="0 0 18 18" fill="none" stroke="#c5c5c5" stroke-width="1.2"><path d="M4.8 2.3v12.5l10-6.25z"/></svg>
<div class="a" style="left:1093.5px;top:103px;font-size:16.5px;color:#3b82f6;-webkit-text-stroke:.4px #3b82f6">ux</div>
<svg class="a" style="left:1120px;top:105px" width="16" height="16" viewBox="0 0 16 16" fill="none" stroke="#c5c5c5" stroke-width="1.2"><rect x="2" y="2" width="12" height="12" rx="1"/><path d="M8 2v12"/></svg>
<svg class="a" style="left:1146px;top:105px" width="16" height="16" viewBox="0 0 16 16" fill="#c5c5c5"><circle cx="3" cy="8" r="1.1"/><circle cx="8" cy="8" r="1.1"/><circle cx="13" cy="8" r="1.1"/></svg>

<div id="rp"></div>
<div class="a" style="left:1177px;top:95px;width:743px;height:35px;background:#252526"></div>
<div class="rt" style="left:1196px;color:#ececec">用户引导</div>
<div class="a" style="left:1195px;top:123px;width:48px;height:2px;background:#e0e0e0"></div>
<div class="rt" style="left:1265px">运行中的模拟器</div>
<div class="rt" style="left:1366px">设备管理</div>
<div class="rt" style="left:1434px">项目管理</div>
<div class="rt" style="left:1502px;top:107px">CHAT</div>
<div class="rt" style="left:1553px">设备管理</div>
<svg class="a" style="left:1890px;top:106px" width="14" height="14" viewBox="0 0 14 14" fill="none" stroke="#d0d0d0" stroke-width="1.3"><path d="M2.5 2.5l9 9M11.5 2.5l-9 9"/></svg>
<svg class="a" style="left:1855px;top:139px" width="15" height="15" viewBox="0 0 15 15" fill="none" stroke="#d0d0d0" stroke-width="1.5"><path d="M12.8 6.2A5.5 5.5 0 1 0 12 11"/><path d="M13 2.5v4h-4" stroke-width="1.3"/></svg>
<svg class="a" style="left:1528px;top:200px" width="42" height="38" viewBox="0 0 42 38" fill="none" stroke="#f26b1d" stroke-width="3" stroke-linejoin="round"><path d="M21 3.5L39.5 35H2.5z"/><path d="M21 13v10" stroke-linecap="round"/><circle cx="21" cy="28.5" r="1" fill="#f26b1d" stroke-width="1.5"/></svg>
<div class="a" style="left:1477px;top:242px;font-size:13px;font-weight:bold;color:#e4e4e4">当前项目不可以正常启动</div>
<div class="a" style="left:1201px;top:293px;width:2px;height:496px;background:#ff900f"></div>
<div class="dot" style="top:287px"></div>
<div class="dot" style="top:397px"></div>
<div class="dot" style="top:571px"></div>
<div class="dot" style="top:783px"></div>
<div class="p14" style="left:1225px;top:285px">1: 检查系统环境</div>
<div class="bul" style="top:318px"></div><div class="p14" style="left:1241px;top:312px">网络: 已连接</div>
<div class="bul" style="top:337px"></div><div class="p14" style="left:1241px;top:331px"><span class="lt">nodejs: </span>已安装<span class="lt">, v20.13.1</span></div>
<div class="p14" style="left:1225px;top:358px">系统环境已满足需求</div>
<svg class="a" style="left:1879px;top:287px" width="14" height="14" viewBox="0 0 14 14"><rect width="14" height="14" fill="#1fc11f"/><path d="M3 7.3l2.7 2.6L11.2 4.2" fill="none" stroke="#fff" stroke-width="1.6"/></svg>
<div class="p14" style="left:1225px;top:394px">2: 安装项目依赖</div>
<svg class="a" style="left:1879px;top:397px" width="14" height="14" viewBox="0 0 14 14" fill="none" stroke="#f5461e" stroke-width="1.8"><path d="M1.5 1.5l11 11M12.5 1.5l-11 11"/></svg>
<div class="bul" style="top:428px"></div><div class="p14" style="left:1241px;top:422px"><span class="lt">node_modules: </span>未安装</div>
<div class="bul" style="top:447px"></div><div class="p14" style="left:1241px;top:441px"><span class="lt">aiot-toolkit: </span>未安装</div>
<div class="p14 red" style="left:1225px;top:468px">当前项目缺少依赖。请在终端运行「<span class="lt">npm i</span>」命令，或点击下方的【安装项目依赖】按钮来安装依赖</div>
<div class="bbtn" style="top:518px"></div>
<div class="badge" style="left:1442px;top:520px">1</div>
<div class="btxt" style="left:1520px;top:525px">安装项目依赖</div>
<div class="p14" style="left:1225px;top:568px">3: 创建模拟器</div>
<svg class="a" style="left:1879px;top:571px" width="14" height="14" viewBox="0 0 14 14" fill="none" stroke="#f5461e" stroke-width="1.8"><path d="M1.5 1.5l11 11M12.5 1.5l-11 11"/></svg>
<div class="bul" style="top:602px"></div><div class="p14" style="left:1241px;top:596px">模拟器环境: 未安装</div>
<div class="bul" style="top:621px"></div><div class="p14" style="left:1241px;top:615px">模拟器实例: 未创建</div>
<div class="p14 red" style="left:1225px;top:642px">需要下载模拟器环境或者创建模拟器。请点击下方的按钮或者<span class="lt">banner</span>栏的【模拟器】去模拟器管理页面进行操</div>
<div class="p14 red" style="left:1225px;top:660px">作</div>
<div class="p14" style="left:1225px;top:680px">如果因网络问题导致无法下载成功，请参考 <span style="color:#3794ff;font-size:12px">手动更新指南</span></div>
<div class="bbtn" style="top:730px"></div>
<div class="badge" style="left:1428px;top:734px">2</div>
<div class="btxt" style="left:1492px;top:737px">初始化模拟器运行环境</div>
<div class="p14" style="left:1225px;top:780px">4: 预览项目</div>
<div class="p14 red" style="left:1225px;top:808px">当前项目无法启动，请先按照上面的步骤提示完成相关的操作</div>
<div class="a" style="left:1239px;top:908px;width:5px;height:5px;border-radius:50%;background:#d4d4d4"></div>
<div class="p14" style="left:1254px;top:901px;color:#3794ff;font-weight:bold;letter-spacing:-.25px">Aiot-Toolkit Usage Help Documentation</div>
<div class="a" style="left:1239px;top:930px;width:5px;height:5px;border-radius:50%;background:#d4d4d4"></div>
<div class="p14" style="left:1254px;top:923px;color:#3794ff;font-weight:bold;letter-spacing:-.25px">Xiaomi Vela JS应用开发和aiot-ide使用帮助手册</div>
<div id="sb"></div>
<div class="a" style="left:0;top:977px;width:34px;height:22px;background:#16825d"></div>
<svg class="a" style="left:9px;top:980px" width="16" height="18" viewBox="0 0 16 18" fill="none" stroke="#ffffff" stroke-width="1.2"><path d="M4 4.5L8.5 8.5 3.5 13.5M12.5 2L7.5 6l5 3.5"/></svg>
<svg class="a" style="left:42px;top:981px" width="14" height="14" viewBox="0 0 14 14" fill="none" stroke="#fff" stroke-width="1.1"><circle cx="7" cy="7" r="5.8"/><path d="M4.2 4.2l5.6 5.6M9.8 4.2L4.2 9.8"/></svg>
<div class="a" style="left:59px;top:982px;font-size:12px;color:#fff">0</div>
<svg class="a" style="left:70px;top:981px" width="14" height="14" viewBox="0 0 14 14" fill="none" stroke="#fff" stroke-width="1.1"><path d="M7 1.5l5.8 10.5H1.2z M7 5.3v3.5M7 9.8v1"/></svg>
<div class="a" style="left:86px;top:982px;font-size:12px;color:#fff">0</div>
<div class="a" style="left:109px;top:980px;font-size:12px;color:#fff">停止</div>
<div class="a" style="left:1471px;top:980px;font-size:12px;color:#fff">行 30，列 2 (已选择4)</div>
<div class="a" style="left:1602px;top:980px;font-size:12px;color:#fff">空格: 2</div>
<div class="a" style="left:1655px;top:982px;font-size:12px;color:#fff">UTF-8</div>
<div class="a" style="left:1702px;top:982px;font-size:12px;color:#fff">CRLF</div>
<div class="a" style="left:1744px;top:982px;font-size:12px;color:#fff">{ }</div>
<div class="a" style="left:1763px;top:982px;font-size:12px;color:#fff">ux</div>
<svg class="a" style="left:1788px;top:981px" width="16" height="13.3" viewBox="0 0 18 15"><rect x="1.8" y="0" width="7.4" height="7" rx="3" fill="#ffffff"/><rect x="8.3" y="0" width="7.4" height="7" rx="3" fill="#ffffff"/><path d="M0 9C0 7 1.5 5.8 3.5 5.8H14C16 5.8 17.5 7 17.5 9v2c0 2-3.5 3.6-8.75 3.6S0 13 0 11z" fill="#ffffff"/><rect x="4.2" y="2.2" width="2.8" height="2.8" rx=".5" fill="#007acc"/><rect x="10.5" y="2.2" width="2.8" height="2.8" rx=".5" fill="#007acc"/><rect x="4" y="7.6" width="9.5" height="4.6" rx="1" fill="#007acc"/><rect x="6.4" y="8.3" width="1.4" height="3.2" fill="#ffffff"/><rect x="9.7" y="8.3" width="1.4" height="3.2" fill="#ffffff"/></svg>
<svg class="a" style="left:1819px;top:981px" width="14" height="14" viewBox="0 0 14 14" fill="none" stroke="#fff" stroke-width="1.2"><circle cx="7" cy="7" r="5.8"/><path d="M2.9 11.1l8.2-8.2"/></svg>
<div class="a" style="left:1835px;top:982px;font-size:12px;color:#fff">Prettier</div>
<svg class="a" style="left:1890px;top:980px" width="15" height="16" viewBox="0 0 15 16" fill="none" stroke="#fff" stroke-width="1.2"><path d="M7.5 1.5c-2.5 0-4 1.8-4 4.3v4L2 12h11l-1.5-2.2v-4c0-2.5-1.5-4.3-4-4.3z M6 13.5c.3.8.8 1 1.5 1s1.2-.2 1.5-1"/></svg>
</body></html>
